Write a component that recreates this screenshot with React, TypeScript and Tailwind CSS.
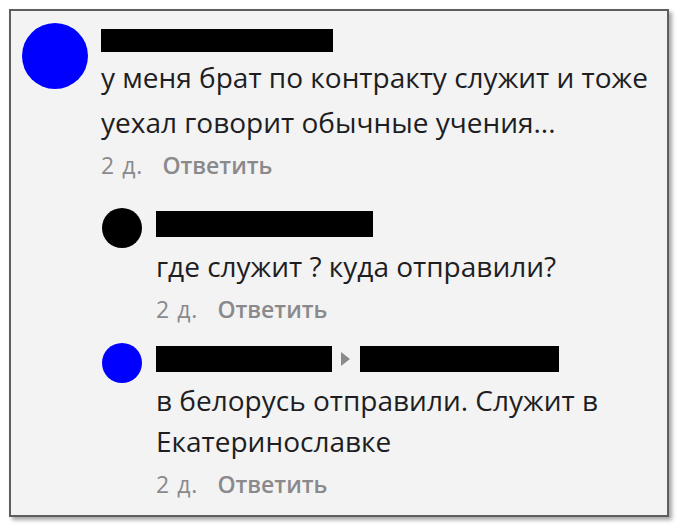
type Reply = {
  avatar: string;
  names: number[];
  lines: string[];
  textGap: string;
};

const font = { fontFamily: '"Open Sans", "Noto Sans", sans-serif' };

function Meta() {
  return (
    <div className="flex items-center gap-[19px] text-[23px] leading-[24px] text-[#8a8a8c]">
      <span className="tracking-[1px]">2 д.</span>
      <span className="font-semibold">Ответить</span>
    </div>
  );
}

function NameBars({ widths }: { widths: number[] }) {
  return (
    <div className="flex items-center gap-[10px]">
      {widths.map((w, i) => (
        <div key={i} className="flex items-center gap-[10px]">
          {i > 0 ? (
            <svg width="9" height="14" viewBox="0 0 9 14" className="-ml-px">
              <path d="M0 0 L9 7 L0 14 Z" fill="#8a8a8c" />
            </svg>
          ) : null}
          <div className="h-[26px] bg-black" style={{ width: w }} />
        </div>
      ))}
    </div>
  );
}

function ReplyRow({ avatar, names, lines, textGap }: Reply) {
  return (
    <div className="flex gap-[14px] pl-[91px]">
      <div className={`h-[40px] w-[40px] shrink-0 rounded-full ${avatar}`} />
      <div className="pt-[3px]">
        <NameBars widths={names} />
        <div className={`${textGap} text-[28px] leading-[41px] text-[#1e1e22]`}>
          {lines.map((l) => (
            <div key={l}>{l}</div>
          ))}
        </div>
        <div className="mt-[10px]">
          <Meta />
        </div>
      </div>
    </div>
  );
}

const replies: Reply[] = [
  {
    avatar: "bg-black",
    names: [217],
    lines: ["где служит ? куда отправили?"],
    textGap: "mt-[9px]",
  },
  {
    avatar: "bg-[#0000ff]",
    names: [176, 199],
    lines: ["в белорусь отправили. Служит в", "Екатеринославке"],
    textGap: "mt-[8px]",
  },
];

export default function App() {
  return (
    <div className="h-[526px] w-[678px] bg-white pl-[9px] pt-[9px]" style={font}>
      <div className="h-[508px] w-[660px] border-2 border-[#5e5e5e] bg-[#f3f3f4] shadow-[3px_3px_4px_rgba(0,0,0,0.35)]">
        <div className="flex gap-[13px] pl-[11px] pt-[12px]">
          <div className="h-[66px] w-[66px] shrink-0 rounded-full bg-[#0000ff]" />
          <div className="pt-[6px]">
            <div className="h-[23px] w-[232px] bg-black" />
            <div className="mt-[3px] text-[28px] leading-[45px] text-[#1e1e22]">
              <div>у меня брат по контракту служит и тоже</div>
              <div>уехал говорит обычные учения...</div>
            </div>
            <div className="mt-[8px]">
              <Meta />
            </div>
          </div>
        </div>
        <div className="mt-[31px] flex flex-col gap-[22px]">
          {replies.map((r, i) => (
            <ReplyRow key={i} {...r} />
          ))}
        </div>
      </div>
    </div>
  );
}
